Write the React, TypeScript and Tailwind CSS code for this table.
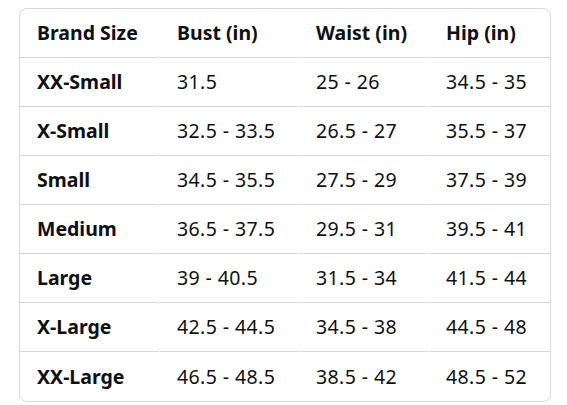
const header = ["Brand Size", "Bust (in)", "Waist (in)", "Hip (in)"];

const rows = [
  ["XX-Small", "31.5", "25 - 26", "34.5 - 35"],
  ["X-Small", "32.5 - 33.5", "26.5 - 27", "35.5 - 37"],
  ["Small", "34.5 - 35.5", "27.5 - 29", "37.5 - 39"],
  ["Medium", "36.5 - 37.5", "29.5 - 31", "39.5 - 41"],
  ["Large", "39 - 40.5", "31.5 - 34", "41.5 - 44"],
  ["X-Large", "42.5 - 44.5", "34.5 - 38", "44.5 - 48"],
  ["XX-Large", "46.5 - 48.5", "38.5 - 42", "48.5 - 52"],
];

const cols = "grid grid-cols-[139px_138px_129px_121px] gap-x-px";

export default function App() {
  return (
    <div className="w-[567px] h-[405px] bg-white pt-2 pl-[19px] font-['Noto_Sans',sans-serif] text-[#0f1111]">
      <div className="w-[532px] rounded-lg border border-[#d5d9d9] overflow-hidden">
        <div className={cols}>
          {header.map((h) => (
            <div key={h} className="h-[49px] flex items-center pl-[17px] border-b border-[#d5d9d9] text-[19.5px] font-bold whitespace-nowrap">
              {h}
            </div>
          ))}
        </div>
        {rows.map((r, i) => (
          <div key={r[0]} className={cols}>
            {r.map((c, j) => (
              <div
                key={j}
                className={`h-[49px] flex items-center pl-[17px] text-[19.5px] whitespace-nowrap ${j === 0 ? "font-bold" : "tracking-[0.4px]"} ${i < rows.length - 1 ? "border-b border-[#d5d9d9]" : ""}`}
              >
                {c}
              </div>
            ))}
          </div>
        ))}
      </div>
    </div>
  );
}
